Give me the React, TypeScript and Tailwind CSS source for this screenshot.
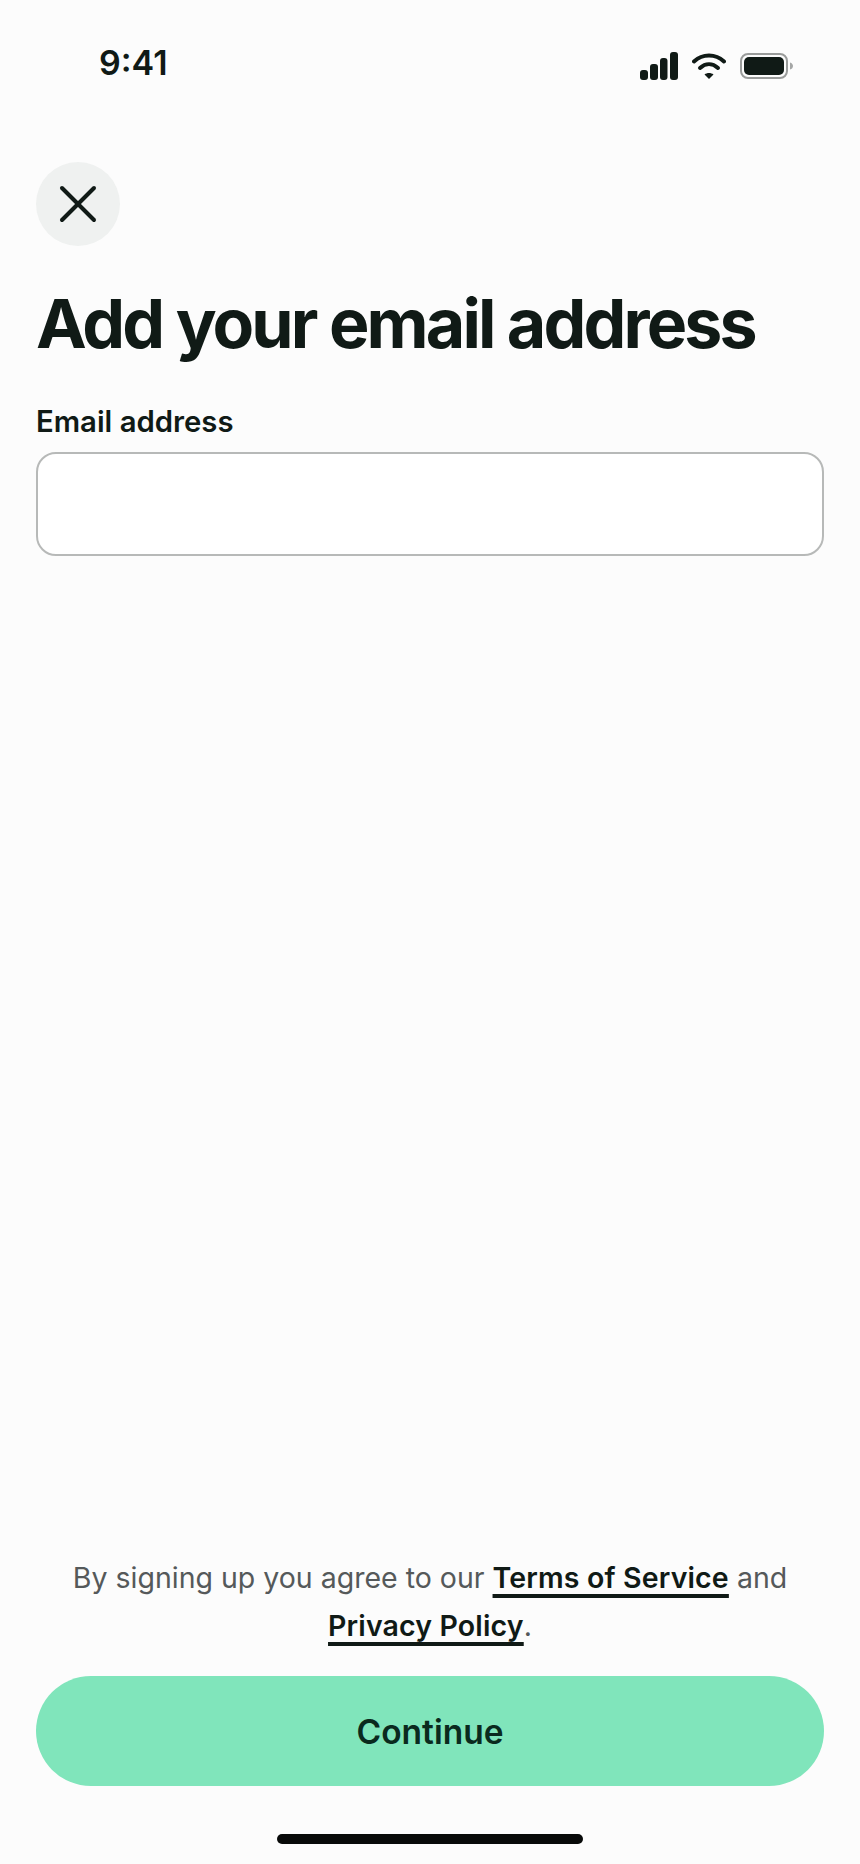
import React from "react";

const inter = "font-['Inter',sans-serif]";

function StatusIcons() {
  return (
    <div className="flex items-center gap-[14px]">
      <svg width="38" height="28" viewBox="0 0 38 28" fill="#101a16">
        <rect x="0" y="18" width="8" height="10" rx="3" />
        <rect x="10" y="12" width="8" height="16" rx="3" />
        <rect x="20" y="6" width="7.500" height="22" rx="3" />
        <rect x="30" y="0" width="8" height="28" rx="3" />
      </svg>
      <svg width="34" height="26" viewBox="0 0 34 26" fill="none">
        <path d="M2 8.500C10.500 0.500 23.500 0.500 32 8.500" stroke="#101a16" strokeWidth="4" strokeLinecap="round" />
        <path d="M8 15C13.500 10 20.500 10 26 15" stroke="#101a16" strokeWidth="4" strokeLinecap="round" />
        <path d="M12.500 21.500C15 19.500 19 19.500 21.500 21.500L17 26Z" fill="#101a16" />
      </svg>
      <svg width="54" height="26" viewBox="0 0 54 26" fill="none">
        <rect x="1" y="1" width="46" height="24" rx="7" stroke="#9a9c9b" strokeWidth="2" />
        <rect x="4" y="4" width="40" height="18" rx="5" fill="#101a16" />
        <path d="M50 9.500C52 10 53 11.500 53 13C53 14.500 52 16 50 16.500Z" fill="#a5a7a6" />
      </svg>
    </div>
  );
}

export default function App() {
  return (
    <div className={`${inter} w-[860px] h-[1864px] bg-[#fcfcfc] text-[#101a16] flex flex-col overflow-hidden`}>
      <header className="h-[130px] flex items-start justify-between pl-[99px] pr-[66px] pt-[43px] shrink-0">
        <span className="text-[34px] leading-[40px] font-semibold">9:41</span>
        <div className="pt-[9px]">
          <StatusIcons />
        </div>
      </header>

      <main className="px-[36px] flex flex-col flex-1">
        <button className="mt-[32px] w-[84px] h-[84px] rounded-full bg-[#eff1f0] flex items-center justify-center">
          <svg width="38" height="38" viewBox="0 0 38 38" fill="none" stroke="#101a16" strokeWidth="4" strokeLinecap="round">
            <path d="M3 3L35 35" />
            <path d="M35 3L3 35" />
          </svg>
        </button>

        <h1 className="mt-[36px] text-[68px] leading-[82px] font-bold tracking-[-2.850px] whitespace-nowrap">
          Add your email address
        </h1>

        <label className="mt-[40px] text-[29.300px] leading-[36px] font-semibold">Email address</label>
        <div className="mt-[12px] h-[104px] rounded-[20px] border-2 border-[#b7b9b8] bg-white" />

        <div className="flex-1" />

        <p className="text-center text-[28.500px] leading-[48px] text-[#55595a]">
          By signing up you agree to our{" "}
          <a className="font-semibold tracking-[0.150px] text-[#101a16] underline decoration-[4px] underline-offset-[6px]">Terms of Service</a> and
          <br />
          <a className="font-semibold tracking-[0.150px] text-[#101a16] underline decoration-[4px] underline-offset-[6px]">Privacy Policy</a>.
        </p>

        <button className="mt-[26px] h-[110px] rounded-full bg-[#80e5bb] pt-[2px] text-[33.500px] font-semibold text-[#0a2a1e] flex items-center justify-center">
          Continue
        </button>

        <div className="mt-[48px] mb-[20px] mx-auto w-[306px] h-[10px] rounded-full bg-[#080a09]" />
      </main>
    </div>
  );
}
